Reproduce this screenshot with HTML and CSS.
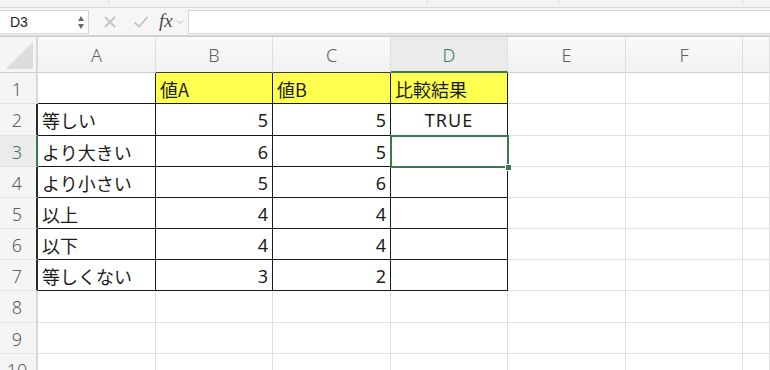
FILE: index.html
```html
<!DOCTYPE html>
<html lang="ja">
<head>
    <meta charset="UTF-8">
    <meta name="viewport" content="width=device-width, initial-scale=1.0">
    <title>比較演算子</title>
    <link rel="stylesheet" href="styles.css">
</head>
<body>
    <div class="toolbar">
        <span class="seg" style="width:109px"></span>
        <span class="seg" style="width:319px"></span>
        <span class="seg" style="width:131px"></span>
        <span class="seg" style="width:184px"></span>
    </div>

    <div class="formula-bar">
        <div class="name-box">
            <span>D3</span>
            <span class="stepper"><i class="up"></i><i class="down"></i></span>
        </div>
        <div class="fx-buttons">
            <svg class="icon cancel" width="14" height="14" viewBox="0 0 14 14">
                <path d="M2 2 L12 12 M12 2 L2 12" stroke="#c4c4c4" stroke-width="1.8" fill="none"/>
            </svg>
            <svg class="icon enter" width="16" height="14" viewBox="0 0 16 14">
                <path d="M1.5 7.5 L6 11.5 L14.5 2" stroke="#c4c4c4" stroke-width="1.8" fill="none"/>
            </svg>
            <span class="fx">fx</span>
            <svg class="chevron" width="8" height="6" viewBox="0 0 8 6">
                <path d="M1 1.5 L4 4.5 L7 1.5" stroke="#bdbdbd" stroke-width="1" fill="none"/>
            </svg>
        </div>
        <div class="formula-input"></div>
    </div>

    <div class="sheet">
        <!-- header row -->
        <div class="c corner"><span class="tri"></span></div>
        <div class="c ch">A</div>
        <div class="c ch dark">B</div>
        <div class="c ch dark">C</div>
        <div class="c ch active">D</div>
        <div class="c ch">E</div>
        <div class="c ch">F</div>
        <div class="c ch"></div>

        <!-- 1 -->
        <div class="c rh">1</div>
        <div class="c b"></div>
        <div class="c b y txt">値A</div>
        <div class="c b y txt">値B</div>
        <div class="c b y txt">比較結果</div>
        <div class="c"></div>
        <div class="c"></div>
        <div class="c"></div>

        <!-- 2 -->
        <div class="c rh dark">2</div>
        <div class="c b txt">等しい</div>
        <div class="c b num">5</div>
        <div class="c b num">5</div>
        <div class="c b mid">TRUE</div>
        <div class="c"></div>
        <div class="c"></div>
        <div class="c"></div>

        <!-- 3 -->
        <div class="c rh active">3</div>
        <div class="c b txt">より大きい</div>
        <div class="c b num">6</div>
        <div class="c b num">5</div>
        <div class="c b sel"><span class="handle"></span></div>
        <div class="c"></div>
        <div class="c"></div>
        <div class="c"></div>

        <!-- 4 -->
        <div class="c rh dark">4</div>
        <div class="c b txt">より小さい</div>
        <div class="c b num">5</div>
        <div class="c b num">6</div>
        <div class="c b"></div>
        <div class="c"></div>
        <div class="c"></div>
        <div class="c"></div>

        <!-- 5 -->
        <div class="c rh dark">5</div>
        <div class="c b txt">以上</div>
        <div class="c b num">4</div>
        <div class="c b num">4</div>
        <div class="c b"></div>
        <div class="c"></div>
        <div class="c"></div>
        <div class="c"></div>

        <!-- 6 -->
        <div class="c rh dark">6</div>
        <div class="c b txt">以下</div>
        <div class="c b num">4</div>
        <div class="c b num">4</div>
        <div class="c b"></div>
        <div class="c"></div>
        <div class="c"></div>
        <div class="c"></div>

        <!-- 7 -->
        <div class="c rh dark">7</div>
        <div class="c b txt">等しくない</div>
        <div class="c b num">3</div>
        <div class="c b num">2</div>
        <div class="c b"></div>
        <div class="c"></div>
        <div class="c"></div>
        <div class="c"></div>

        <!-- 8 -->
        <div class="c rh">8</div>
        <div class="c"></div>
        <div class="c"></div>
        <div class="c"></div>
        <div class="c"></div>
        <div class="c"></div>
        <div class="c"></div>
        <div class="c"></div>

        <!-- 9 -->
        <div class="c rh">9</div>
        <div class="c"></div>
        <div class="c"></div>
        <div class="c"></div>
        <div class="c"></div>
        <div class="c"></div>
        <div class="c"></div>
        <div class="c"></div>

        <!-- 10 -->
        <div class="c rh">10</div>
        <div class="c"></div>
        <div class="c"></div>
        <div class="c"></div>
        <div class="c"></div>
        <div class="c"></div>
        <div class="c"></div>
        <div class="c"></div>
    </div>
</body>
</html>
```

FILE: styles.css
```css
* {
    margin: 0;
    padding: 0;
    box-sizing: border-box;
}

html, body {
    height: 100%;
    overflow: hidden;
}

body {
    font-family: "Noto Sans CJK JP", "Noto Sans", sans-serif;
    background: #ffffff;
    color: #1c1c1c;
}

/* top strip (bottom of the ribbon) */
.toolbar {
    height: 8px;
    background: #f3f3f3;
    border-bottom: 1px solid #d6d6d6;
    display: flex;
}

.toolbar .seg {
    height: 4px;
    border-right: 1px solid #d9d9d9;
}

/* formula bar */
.formula-bar {
    height: 29px;
    background: #f6f6f6;
    border-bottom: 2px solid #d2d2d2;
    display: flex;
    align-items: flex-start;
    padding-top: 2px;
}

.name-box {
    width: 89px;
    height: 24px;
    background: #fff;
    border: 1px solid #d6d6d6;
    border-left: none;
    display: flex;
    align-items: center;
    justify-content: space-between;
    padding: 0 4px 0 10px;
    font-family: "Liberation Sans", Arial, sans-serif;
    font-size: 14px;
    color: #222;
}

.stepper {
    display: flex;
    flex-direction: column;
    gap: 3px;
}

.stepper i {
    display: block;
    width: 0;
    height: 0;
    border-left: 3.5px solid transparent;
    border-right: 3.5px solid transparent;
}

.stepper .up {
    border-bottom: 5px solid #6a6a6a;
}

.stepper .down {
    border-top: 5px solid #6a6a6a;
}

.fx-buttons {
    width: 99px;
    height: 24px;
    display: flex;
    align-items: center;
    padding-left: 14px;
}

.fx-buttons .cancel {
    margin-right: 16px;
}

.fx-buttons .enter {
    margin-right: 10px;
}

.fx {
    font-family: "Liberation Serif", "Times New Roman", serif;
    font-style: italic;
    font-size: 19px;
    color: #4a4a4a;
    margin-right: 3px;
    line-height: 1;
    padding-bottom: 3px;
}

.formula-input {
    flex: 1;
    height: 24px;
    background: #fff;
    border: 1px solid #d6d6d6;
    border-right: none;
}

/* sheet grid */
.sheet {
    display: grid;
    grid-template-columns: 38px 118px 117px 118px 117px 118px 117px 1fr;
    grid-template-rows: 36px 31px 32px 31px 31px 31px 31px 31px 32px 31px 31px;
}

.c {
    border-right: 1px solid #e0e0e0;
    border-bottom: 1px solid #e0e0e0;
    font-size: 18px;
    display: flex;
    align-items: center;
    padding-top: 1px;
    white-space: nowrap;
}

.corner {
    background: #f5f5f5;
    border-right: 2px solid #d8d8d8;
    border-bottom: 1px solid #d0d0d0;
    position: relative;
}

.corner .tri {
    position: absolute;
    right: 3px;
    bottom: 3px;
    width: 0;
    height: 0;
    border-left: 27px solid transparent;
    border-bottom: 27px solid #dcdcdc;
}

/* column headers */
.ch {
    background: linear-gradient(#fafafa, #f1f1f1);
    border-right: 1px solid #dedede;
    border-bottom: 1px solid #cfcfcf;
    justify-content: center;
    color: #5e5e5e;
    font-family: "Noto Sans", sans-serif;
    font-size: 18px;
    font-weight: 300;
}

.ch.dark {
    border-bottom-color: #3a3a3a;
}

.ch.active {
    background: #ebebeb;
    color: #3a7a4e;
    border-bottom: 2px solid #3a7a4e;
}

/* row headers */
.rh {
    background: #f5f5f5;
    border-right: 2px solid #d8d8d8;
    border-bottom: 1px solid #e2e2e2;
    justify-content: center;
    color: #5e5e5e;
    font-family: "Noto Sans", sans-serif;
    font-weight: 300;
    padding-right: 2px;
}

.rh.dark {
    border-right-color: #2a2a2a;
}

.rh.active {
    background: #ebebeb;
    color: #3a7a4e;
    border-right: 2px solid #3a7a4e;
}

/* bordered data cells */
.b {
    border-right: 1px solid #1a1a1a;
    border-bottom: 1px solid #1a1a1a;
}

.y {
    background: #ffff4f;
}

.txt {
    padding-left: 4px;
}

.num {
    justify-content: flex-end;
    padding-right: 4px;
    font-family: "Noto Sans", sans-serif;
}

.mid {
    justify-content: center;
    font-family: "Noto Sans", sans-serif;
    letter-spacing: 1px;
}

/* selected cell D3 */
.sel {
    position: relative;
}

.sel::after {
    content: "";
    position: absolute;
    top: -1px;
    left: -1px;
    right: -2px;
    bottom: -2px;
    border: 2px solid #3a7a4e;
}

.sel .handle {
    position: absolute;
    right: -5px;
    bottom: -5px;
    width: 7px;
    height: 7px;
    background: #3a7a4e;
    border: 1px solid #fff;
    z-index: 2;
}
```
